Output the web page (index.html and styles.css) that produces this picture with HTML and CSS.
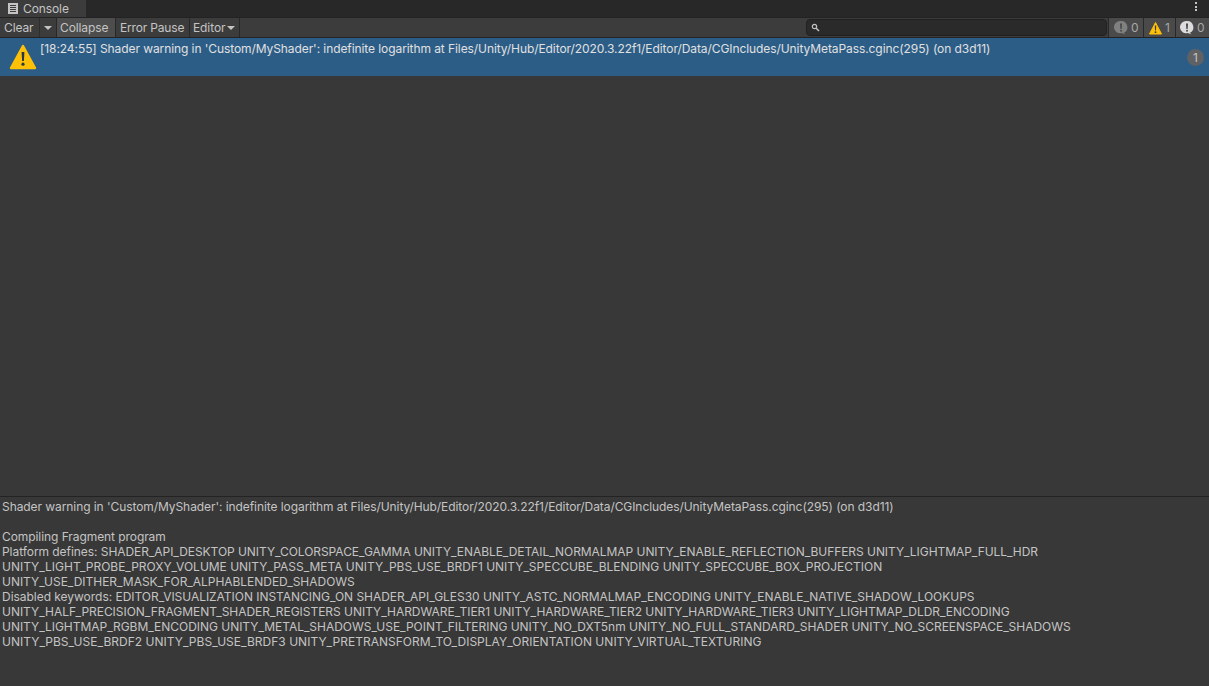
FILE: index.html
```html
<!DOCTYPE html>
<html lang="en">
<head>
<meta charset="utf-8">
<title>Console</title>
<link rel="stylesheet" href="styles.css">
</head>
<body>
<div class="window">
  <div class="tabbar">
    <div class="tab">
      <svg class="tab-icon" width="12" height="12" viewBox="0 0 12 12"><path d="M1 0h10v11H1z" fill="#c4c4c4"/><path d="M3 2.5h6M3 4.5h6M3 6.5h6M3 8.5h6" stroke="#3c3c3c" stroke-width="1"/></svg>
      <span>Console</span>
    </div>
    <div class="kebab"><i></i><i></i><i></i></div>
  </div>
  <div class="toolbar">
    <div class="btn btn-clear">Clear</div>
    <div class="btn btn-drop"><span class="caret"></span></div>
    <div class="btn btn-on">Collapse</div>
    <div class="btn btn-pause">Error Pause</div>
    <div class="btn btn-editor">Editor<span class="caret"></span></div>
    <div class="search">
      <svg width="9" height="9" viewBox="0 0 9 9"><circle cx="3.5" cy="3.5" r="2.2" fill="none" stroke="#c4c4c4" stroke-width="1.2"/><path d="M5.2 5.2 8 8" stroke="#c4c4c4" stroke-width="1.5"/></svg>
    </div>
    <div class="counter counter-first">
      <svg width="14" height="15" viewBox="0 0 14 15"><path d="M7 1a6.2 6.2 0 0 1 2.8 11.8l1.7 1.7-3.6-1.4A6.2 6.2 0 1 1 7 1z" fill="#808080"/><path d="M6 3.5h2l-.3 5.5H6.3z" fill="#4a4a4a"/><circle cx="7" cy="10.8" r="1" fill="#4a4a4a"/></svg>
      <span>0</span>
    </div>
    <div class="counter counter-mid">
      <svg width="15" height="14" viewBox="0 0 15 14"><path d="M7.5 1.5 13.5 13h-12z" fill="#ffc107" stroke="#ffc107" stroke-linejoin="round"/><path d="M6.8 4.5h1.4l-.2 5H7z" fill="#3c3c3c"/><circle cx="7.5" cy="11.2" r=".9" fill="#3c3c3c"/></svg>
      <span>1</span>
    </div>
    <div class="counter counter-last">
      <svg width="14" height="15" viewBox="0 0 14 15"><path d="M7 1a6.2 6.2 0 0 1 2.8 11.8l1.7 1.7-3.6-1.4A6.2 6.2 0 1 1 7 1z" fill="#dcdcdc"/><path d="M6 3.5h2l-.3 5.5H6.3z" fill="#4a4a4a"/><circle cx="7" cy="10.8" r="1" fill="#4a4a4a"/></svg>
      <span>0</span>
    </div>
  </div>
  <div class="list">
    <div class="row">
      <svg class="row-icon" width="28" height="26" viewBox="0 0 28 26"><path d="M14 2 26 24H2z" fill="#ffc107" stroke="#ffc107" stroke-width="2.4" stroke-linejoin="round"/><path d="M12.6 8h2.8l-.5 9h-1.8z" fill="#26394a"/><circle cx="14" cy="20.2" r="1.6" fill="#26394a"/></svg>
      <div class="row-text">[18:24:55] Shader warning in 'Custom/MyShader': indefinite logarithm at Files/Unity/Hub/Editor/2020.3.22f1/Editor/Data/CGIncludes/UnityMetaPass.cginc(295) (on d3d11)</div>
      <div class="badge">1</div>
    </div>
  </div>
  <div class="details">
    <p class="prose">Shader warning in 'Custom/MyShader': indefinite logarithm at Files/Unity/Hub/Editor/2020.3.22f1/Editor/Data/CGIncludes/UnityMetaPass.cginc(295) (on d3d11)</p>
    <p>&nbsp;</p>
    <p class="prose">Compiling Fragment program</p>
    <p class="tight">Platform defines: SHADER_API_DESKTOP UNITY_COLORSPACE_GAMMA UNITY_ENABLE_DETAIL_NORMALMAP UNITY_ENABLE_REFLECTION_BUFFERS UNITY_LIGHTMAP_FULL_HDR</p>
    <p class="wide">UNITY_LIGHT_PROBE_PROXY_VOLUME UNITY_PASS_META UNITY_PBS_USE_BRDF1 UNITY_SPECCUBE_BLENDING UNITY_SPECCUBE_BOX_PROJECTION</p>
    <p>UNITY_USE_DITHER_MASK_FOR_ALPHABLENDED_SHADOWS</p>
    <p>Disabled keywords: EDITOR_VISUALIZATION INSTANCING_ON SHADER_API_GLES30 UNITY_ASTC_NORMALMAP_ENCODING UNITY_ENABLE_NATIVE_SHADOW_LOOKUPS</p>
    <p>UNITY_HALF_PRECISION_FRAGMENT_SHADER_REGISTERS UNITY_HARDWARE_TIER1 UNITY_HARDWARE_TIER2 UNITY_HARDWARE_TIER3 UNITY_LIGHTMAP_DLDR_ENCODING</p>
    <p>UNITY_LIGHTMAP_RGBM_ENCODING UNITY_METAL_SHADOWS_USE_POINT_FILTERING UNITY_NO_DXT5nm UNITY_NO_FULL_STANDARD_SHADER UNITY_NO_SCREENSPACE_SHADOWS</p>
    <p class="widest">UNITY_PBS_USE_BRDF2 UNITY_PBS_USE_BRDF3 UNITY_PRETRANSFORM_TO_DISPLAY_ORIENTATION UNITY_VIRTUAL_TEXTURING</p>
  </div>
</div>
</body>
</html>
```
FILE: styles.css
```css
* { box-sizing: border-box; }
html, body { margin: 0; height: 100%; overflow: hidden; }
body { background: #383838; font-family: Inter, "Noto Sans", sans-serif; font-size: 12px; color: #c4c4c4; }
.window { display: flex; flex-direction: column; height: 686px; }
.tabbar { height: 17px; background: #282828; display: flex; align-items: stretch; justify-content: space-between; flex: none; }
.tab { width: 86px; background: #3c3c3c; display: flex; align-items: center; gap: 4px; padding-left: 7px; letter-spacing: -.1px; }
.tab-icon { flex: none; }
.kebab { width: 26px; display: flex; flex-direction: column; align-items: center; justify-content: flex-start; gap: 1.5px; padding-top: 2px; }
.kebab i { width: 2px; height: 2px; background: #c4c4c4; display: block; }
.toolbar { height: 21px; background: #3c3c3c; border-top: 1px solid #232323; border-bottom: 1px solid #232323; display: flex; align-items: stretch; flex: none; }
.btn { background: #3c3c3c; border-right: 1px solid #282828; display: flex; align-items: center; padding: 0 4px; white-space: nowrap; letter-spacing: -.1px; }
.btn-clear { width: 40px; border-right: 1px solid #2e2e2e; }
.btn-drop { width: 17px; justify-content: center; padding: 0; }
.btn-on { background: #4d4d4d; width: 59px; padding-left: 3px; }
.btn-pause { width: 74px; letter-spacing: -.17px; }
.btn-editor { width: 50px; padding-left: 3px; gap: 2px; }
.caret { width: 0; height: 0; border-left: 4px solid transparent; border-right: 4px solid transparent; border-top: 4px solid #c4c4c4; display: block; }
.search { margin: 1px 1px 1px auto; width: 301px; height: 17px; background: #2a2a2a; border: 1px solid #212121; border-radius: 4px; display: flex; align-items: center; padding-left: 4px; }
.counter { background: #4a4a4a; border-left: 1px solid #282828; display: flex; align-items: center; gap: 3px; padding-left: 5px; }
.counter span { color: #a8a8a8; }
.counter-first { width: 35px; }
.counter-mid { width: 32px; padding-left: 4px; gap: 2px; }
.counter-last { width: 34px; padding-left: 4px; }
.list { flex: 1; background: #383838; min-height: 0; }
.row { height: 38px; background: #2c5d87; position: relative; display: flex; color: #e0e0e0; }
.row-icon { position: absolute; left: 9px; top: 6px; }
.row-text { padding: 3px 0 0 40px; line-height: 15px; white-space: nowrap; letter-spacing: -.08px; }
.badge { position: absolute; right: 5px; top: 11px; width: 17px; height: 17px; border-radius: 50%; background: #5f6164; color: #c4c4c4; text-align: center; line-height: 17px; }
.details { height: 190px; border-top: 1px solid #232323; flex: none; padding: 2px 0 0 2px; background: #383838; }
.details p { margin: 0; line-height: 15px; white-space: nowrap; letter-spacing: -.032px; }
.details .prose { letter-spacing: -.072px; }
.details .tight { letter-spacing: -.055px; }
.details .wide { letter-spacing: -.018px; }
.details .widest { letter-spacing: .02px; }
```
